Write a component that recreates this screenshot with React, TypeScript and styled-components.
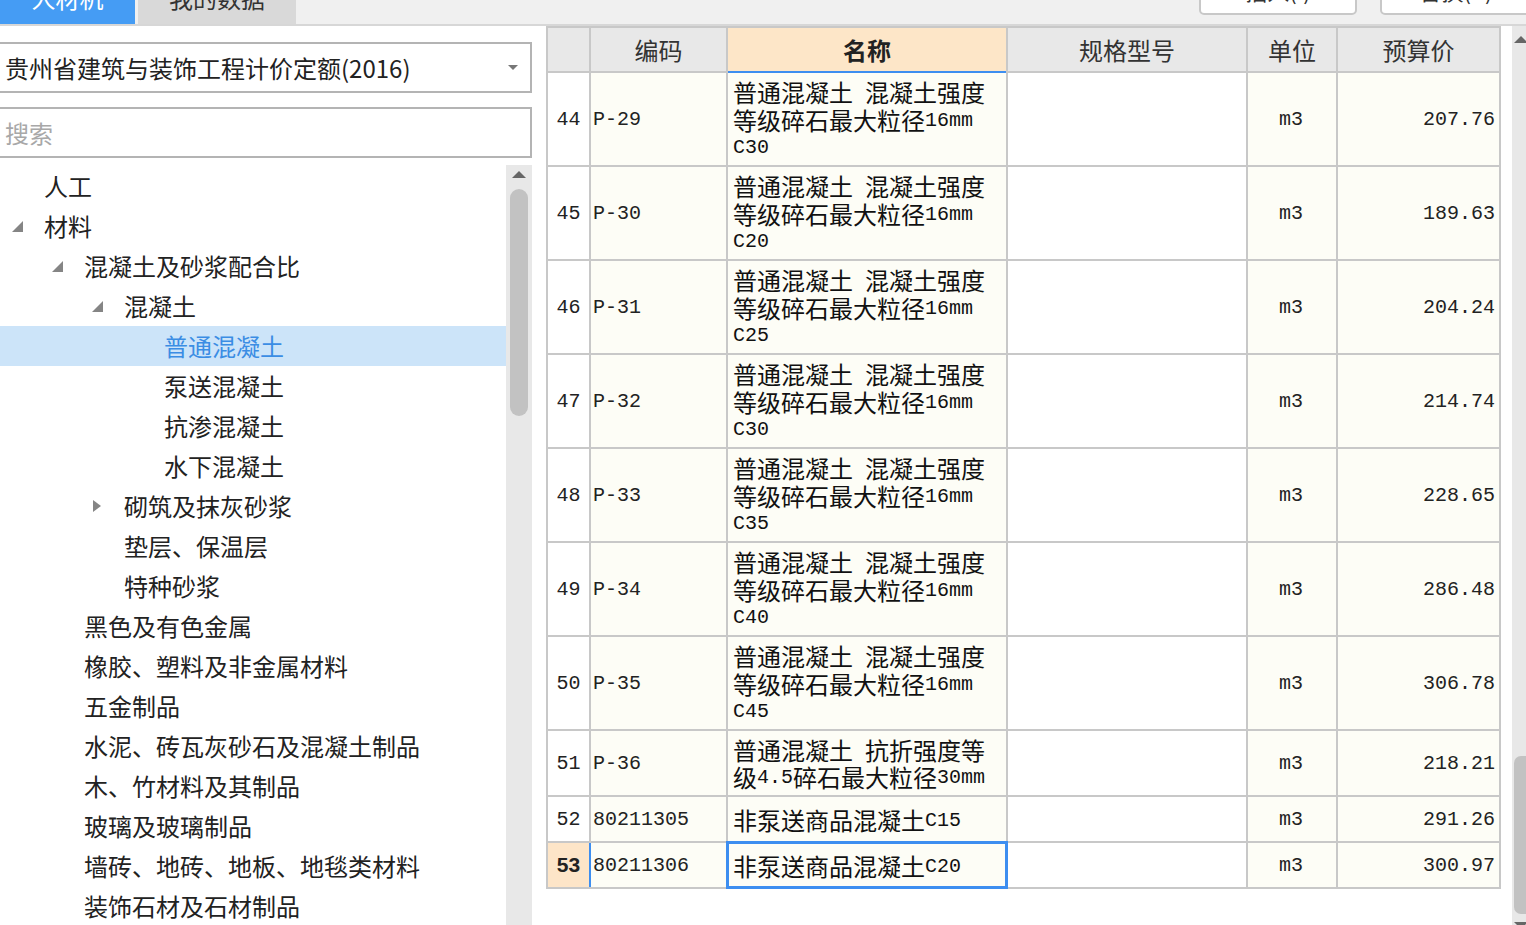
import React from 'react';
import styled, { createGlobalStyle } from 'styled-components';

const GlobalStyle = createGlobalStyle`
  html, body, #root {
    margin: 0;
    padding: 0;
    height: 100%;
  }
  body {
    overflow: hidden;
    background: #fff;
    font-family: "Noto Sans CJK SC", "Noto Sans", sans-serif;
  }
`;

const Page = styled.div`
  width: 1526px;
  height: 925px;
  display: flex;
  flex-direction: column;
  overflow: hidden;
  background: #fff;
`;

// Top tab strip (cut off by the window edge)
const TopBar = styled.div`
  height: 24px;
  flex: none;
  display: flex;
  background: #f0f0f0;
  border-bottom: 2px solid #d7d7d7;
`;

const Tab = styled.div<{ $active?: boolean }>`
  width: ${(p) => (p.$active ? 135 : 158)}px;
  margin-right: 3px;
  height: 24px;
  box-sizing: border-box;
  padding-bottom: 14px;
  display: flex;
  align-items: flex-end;
  justify-content: center;
  overflow: hidden;
  background: ${(p) => (p.$active ? '#459cf4' : '#d9d9d9')};
  color: ${(p) => (p.$active ? '#fff' : '#333')};
  font-size: 24px;
  line-height: 24px;
`;

const ToolButtons = styled.div`
  margin-left: auto;
  margin-right: -6px;
  display: flex;
  gap: 23px;
  height: 24px;
`;

const ToolButton = styled.div<{ $w: number }>`
  width: ${(p) => p.$w}px;
  height: 41px;
  margin-top: -26px;
  box-sizing: border-box;
  border: 2px solid #c8c8c8;
  border-radius: 5px;
  background: #fff;
  display: flex;
  align-items: flex-end;
  justify-content: center;
  padding-bottom: 12px;
  font-size: 22px;
  line-height: 22px;
  color: #333;
`;

const Main = styled.div`
  flex: 1;
  display: flex;
  min-height: 0;
`;

// Left: quota library + category tree
const LeftPanel = styled.div`
  width: 546px;
  flex: none;
  box-sizing: border-box;
  padding: 16px 14px 0 0;
  display: flex;
  flex-direction: column;
`;

const Select = styled.div`
  height: 51px;
  margin-left: -4px;
  box-sizing: border-box;
  border: 2px solid #b4b4b4;
  display: flex;
  align-items: center;
  justify-content: space-between;
  padding: 0 12px 0 7px;
  font-size: 24px;
  color: #222;
`;

const Caret = styled.span`
  width: 0;
  height: 0;
  border-left: 5px solid transparent;
  border-right: 5px solid transparent;
  border-top: 5px solid #777;
`;

const Search = styled.input`
  height: 51px;
  margin: 14px 0 0 -4px;
  box-sizing: border-box;
  border: 2px solid #b4b4b4;
  padding: 0 0 0 7px;
  font-family: "Noto Sans CJK SC", sans-serif;
  font-size: 24px;
  outline: none;
  &::placeholder {
    color: #a8a8a8;
  }
`;

const TreeArea = styled.div`
  flex: 1;
  margin-top: 7px;
  display: flex;
  min-height: 0;
  overflow: hidden;
`;

const TreeList = styled.div`
  flex: 1;
  padding-top: 1px;
`;

const TreeRow = styled.div<{ $level: number; $selected?: boolean }>`
  height: 40px;
  display: flex;
  align-items: center;
  padding-left: ${(p) => 4 + p.$level * 40}px;
  background: ${(p) => (p.$selected ? '#cce4f9' : 'transparent')};
  color: ${(p) => (p.$selected ? '#3b8de4' : '#222')};
  font-size: 24px;
  line-height: 30px;
  white-space: nowrap;
`;

const ExpanderSlot = styled.span`
  width: 40px;
  flex: none;
  box-sizing: border-box;
  padding-left: 8px;
  display: flex;
  align-items: center;
`;

const Expander = styled.span<{ $open: boolean }>`
  width: 0;
  height: 0;
  ${(p) =>
    p.$open
      ? `border-bottom: 11px solid #858585; border-left: 11px solid transparent;`
      : `border-left: 8px solid #858585; border-top: 6px solid transparent; border-bottom: 6px solid transparent; margin-left: 1px;`}
`;

const TreeScroll = styled.div`
  width: 26px;
  flex: none;
  background: #e8e8e8;
  display: flex;
  flex-direction: column;
  align-items: center;
  padding-top: 6px;
`;

const UpArrow = styled.span`
  width: 0;
  height: 0;
  border-left: 7px solid transparent;
  border-right: 7px solid transparent;
  border-bottom: 7px solid #666;
`;

const TreeThumb = styled.div`
  width: 18px;
  height: 227px;
  margin-top: 11px;
  border-radius: 9px;
  background: #c2c2c2;
`;

// Right: material grid
const RightPanel = styled.div`
  flex: 1;
  display: flex;
  min-width: 0;
`;

const Grid = styled.div`
  width: 955px;
  box-sizing: border-box;
  align-self: flex-start;
  display: flex;
  flex-direction: column;
  gap: 2px;
  padding: 2px;
  background: #c8c8c8;
`;

const Row = styled.div<{ $h: number }>`
  height: ${(p) => p.$h}px;
  display: grid;
  grid-template-columns: 41px 135px 278px 238px 88px 161px;
  column-gap: 2px;
`;

const HeadCell = styled.div<{ $hl?: boolean }>`
  background: ${(p) => (p.$hl ? '#fde6c8' : '#e8e8e8')};
  box-shadow: ${(p) => (p.$hl ? '0 2px 0 #3d8ef0' : 'none')};
  display: flex;
  align-items: center;
  justify-content: center;
  font-size: 24px;
  font-weight: ${(p) => (p.$hl ? 700 : 400)};
  color: ${(p) => (p.$hl ? '#222' : '#333')};
`;

const AsciiCell = styled.div<{ $align: 'flex-start' | 'center' | 'flex-end'; $white?: boolean }>`
  background: ${(p) => (p.$white ? '#fff' : '#fdfdf6')};
  display: flex;
  align-items: center;
  justify-content: ${(p) => p.$align};
  padding: 0 4px 0 2px;
  font-family: "Liberation Mono", monospace;
  font-size: 20px;
  color: #222;
`;

const RowNum = styled.div<{ $selected?: boolean }>`
  background: ${(p) => (p.$selected ? '#fde5c8' : '#fff')};
  display: flex;
  align-items: center;
  justify-content: center;
  font-family: ${(p) => (p.$selected ? '"Liberation Sans", sans-serif' : '"Liberation Mono", monospace')};
  font-weight: ${(p) => (p.$selected ? 700 : 400)};
  font-size: ${(p) => (p.$selected ? 21 : 20)}px;
  color: #222;
`;

const CodeCell = styled(AsciiCell)<{ $selected?: boolean }>`
  box-shadow: ${(p) => (p.$selected ? '-2px 0 0 #3d8ef0' : 'none')};
`;

const NameCell = styled.div<{ $selected?: boolean }>`
  background: #fdfdf6;
  display: flex;
  flex-direction: column;
  justify-content: center;
  padding-left: 5px;
  font-size: 24px;
  color: #111;
  white-space: pre;
  box-shadow: ${(p) => (p.$selected ? '0 0 0 2px #3d8ef0, inset 0 0 0 1px #3d8ef0' : 'none')};
`;

const NameLine = styled.div`
  height: 27.5px;
  flex: none;
  display: flex;
  align-items: center;
  line-height: 27px;
`;

const Ascii = styled.span`
  font-family: "Liberation Mono", monospace;
  font-size: 20px;
  line-height: 27px;
  padding-top: 2px;
`;

const SpecCell = styled.div`
  background: #fff;
`;

const RightScroll = styled.div`
  width: 14px;
  margin-left: auto;
  flex: none;
  background: #e8e8e8;
  display: flex;
  flex-direction: column;
  align-items: flex-start;
  overflow: hidden;
  padding-top: 10px;
  box-sizing: border-box;
`;

const SideArrow = styled.span`
  margin-left: 2px;
  width: 0;
  height: 0;
  border-left: 7px solid transparent;
  border-right: 7px solid transparent;
  border-bottom: 7px solid #666;
`;

const SideThumb = styled.div`
  margin-top: auto;
  margin-left: 2px;
  width: 14px;
  height: 158px;
  border-radius: 7px 0 0 7px;
  background: #c2c2c2;
`;

const SideDown = styled.span`
  margin: 8px 0 -4px 2px;
  width: 0;
  height: 0;
  border-left: 7px solid transparent;
  border-right: 7px solid transparent;
  border-top: 7px solid #666;
`;

type TreeItem = { level: number; label: string; open?: boolean; selected?: boolean };

const tree: TreeItem[] = [
  { level: 0, label: '人工' },
  { level: 0, label: '材料', open: true },
  { level: 1, label: '混凝土及砂浆配合比', open: true },
  { level: 2, label: '混凝土', open: true },
  { level: 3, label: '普通混凝土', selected: true },
  { level: 3, label: '泵送混凝土' },
  { level: 3, label: '抗渗混凝土' },
  { level: 3, label: '水下混凝土' },
  { level: 2, label: '砌筑及抹灰砂浆', open: false },
  { level: 2, label: '垫层、保温层' },
  { level: 2, label: '特种砂浆' },
  { level: 1, label: '黑色及有色金属' },
  { level: 1, label: '橡胶、塑料及非金属材料' },
  { level: 1, label: '五金制品' },
  { level: 1, label: '水泥、砖瓦灰砂石及混凝土制品' },
  { level: 1, label: '木、竹材料及其制品' },
  { level: 1, label: '玻璃及玻璃制品' },
  { level: 1, label: '墙砖、地砖、地板、地毯类材料' },
  { level: 1, label: '装饰石材及石材制品' },
];

type Material = { no: number; code: string; name: string[]; unit: string; price: string; h: number };

const concrete = (grade: string) => ['普通混凝土 混凝土强度', '等级碎石最大粒径16mm', grade];

const rows: Material[] = [
  { no: 44, code: 'P-29', name: concrete('C30'), unit: 'm3', price: '207.76', h: 92 },
  { no: 45, code: 'P-30', name: concrete('C20'), unit: 'm3', price: '189.63', h: 92 },
  { no: 46, code: 'P-31', name: concrete('C25'), unit: 'm3', price: '204.24', h: 92 },
  { no: 47, code: 'P-32', name: concrete('C30'), unit: 'm3', price: '214.74', h: 92 },
  { no: 48, code: 'P-33', name: concrete('C35'), unit: 'm3', price: '228.65', h: 92 },
  { no: 49, code: 'P-34', name: concrete('C40'), unit: 'm3', price: '286.48', h: 92 },
  { no: 50, code: 'P-35', name: concrete('C45'), unit: 'm3', price: '306.78', h: 92 },
  { no: 51, code: 'P-36', name: ['普通混凝土 抗折强度等', '级4.5碎石最大粒径30mm'], unit: 'm3', price: '218.21', h: 64 },
  { no: 52, code: '80211305', name: ['非泵送商品混凝土C15'], unit: 'm3', price: '291.26', h: 44 },
  { no: 53, code: '80211306', name: ['非泵送商品混凝土C20'], unit: 'm3', price: '300.97', h: 44 },
];

const SELECTED = 53;

// SimSun-style half-width ASCII inside CJK text
const Mixed: React.FC<{ text: string }> = ({ text }) => (
  <NameLine>
    {text
      .split(/([\x20-\x7e]+)/)
      .filter(Boolean)
      .map((part, i) =>
        /^[\x20-\x7e]+$/.test(part) ? <Ascii key={i}>{part}</Ascii> : <span key={i}>{part}</span>
      )}
  </NameLine>
);

const App: React.FC = () => {
  return (
    <>
      <GlobalStyle />
      <Page>
        <TopBar>
          <Tab $active>人材机</Tab>
          <Tab>我的数据</Tab>
          <ToolButtons>
            <ToolButton $w={158}>插入(I)</ToolButton>
            <ToolButton $w={152}>替换(R)</ToolButton>
          </ToolButtons>
        </TopBar>

        <Main>
          <LeftPanel>
            <Select>
              <span>贵州省建筑与装饰工程计价定额(2016)</span>
              <Caret />
            </Select>
            <Search placeholder="搜索" />
            <TreeArea>
              <TreeList>
                {tree.map((item) => (
                  <TreeRow key={item.label} $level={item.level} $selected={item.selected}>
                    <ExpanderSlot>{item.open !== undefined && <Expander $open={item.open} />}</ExpanderSlot>
                    {item.label}
                  </TreeRow>
                ))}
              </TreeList>
              <TreeScroll>
                <UpArrow />
                <TreeThumb />
              </TreeScroll>
            </TreeArea>
          </LeftPanel>

          <RightPanel>
            <Grid>
              <Row $h={43}>
                <HeadCell />
                <HeadCell>编码</HeadCell>
                <HeadCell $hl>名称</HeadCell>
                <HeadCell>规格型号</HeadCell>
                <HeadCell>单位</HeadCell>
                <HeadCell>预算价</HeadCell>
              </Row>
              {rows.map((r) => {
                const sel = r.no === SELECTED;
                return (
                  <Row key={r.no} $h={r.h}>
                    <RowNum $selected={sel}>{r.no}</RowNum>
                    <CodeCell $align="flex-start" $selected={sel}>
                      {r.code}
                    </CodeCell>
                    <NameCell $selected={sel}>
                      {r.name.map((line, i) => (
                        <Mixed key={i} text={line} />
                      ))}
                    </NameCell>
                    <SpecCell />
                    <AsciiCell $align="center">{r.unit}</AsciiCell>
                    <AsciiCell $align="flex-end">{r.price}</AsciiCell>
                  </Row>
                );
              })}
            </Grid>
            <RightScroll>
              <SideArrow />
              <SideThumb />
              <SideDown />
            </RightScroll>
          </RightPanel>
        </Main>
      </Page>
    </>
  );
};

export default App;
